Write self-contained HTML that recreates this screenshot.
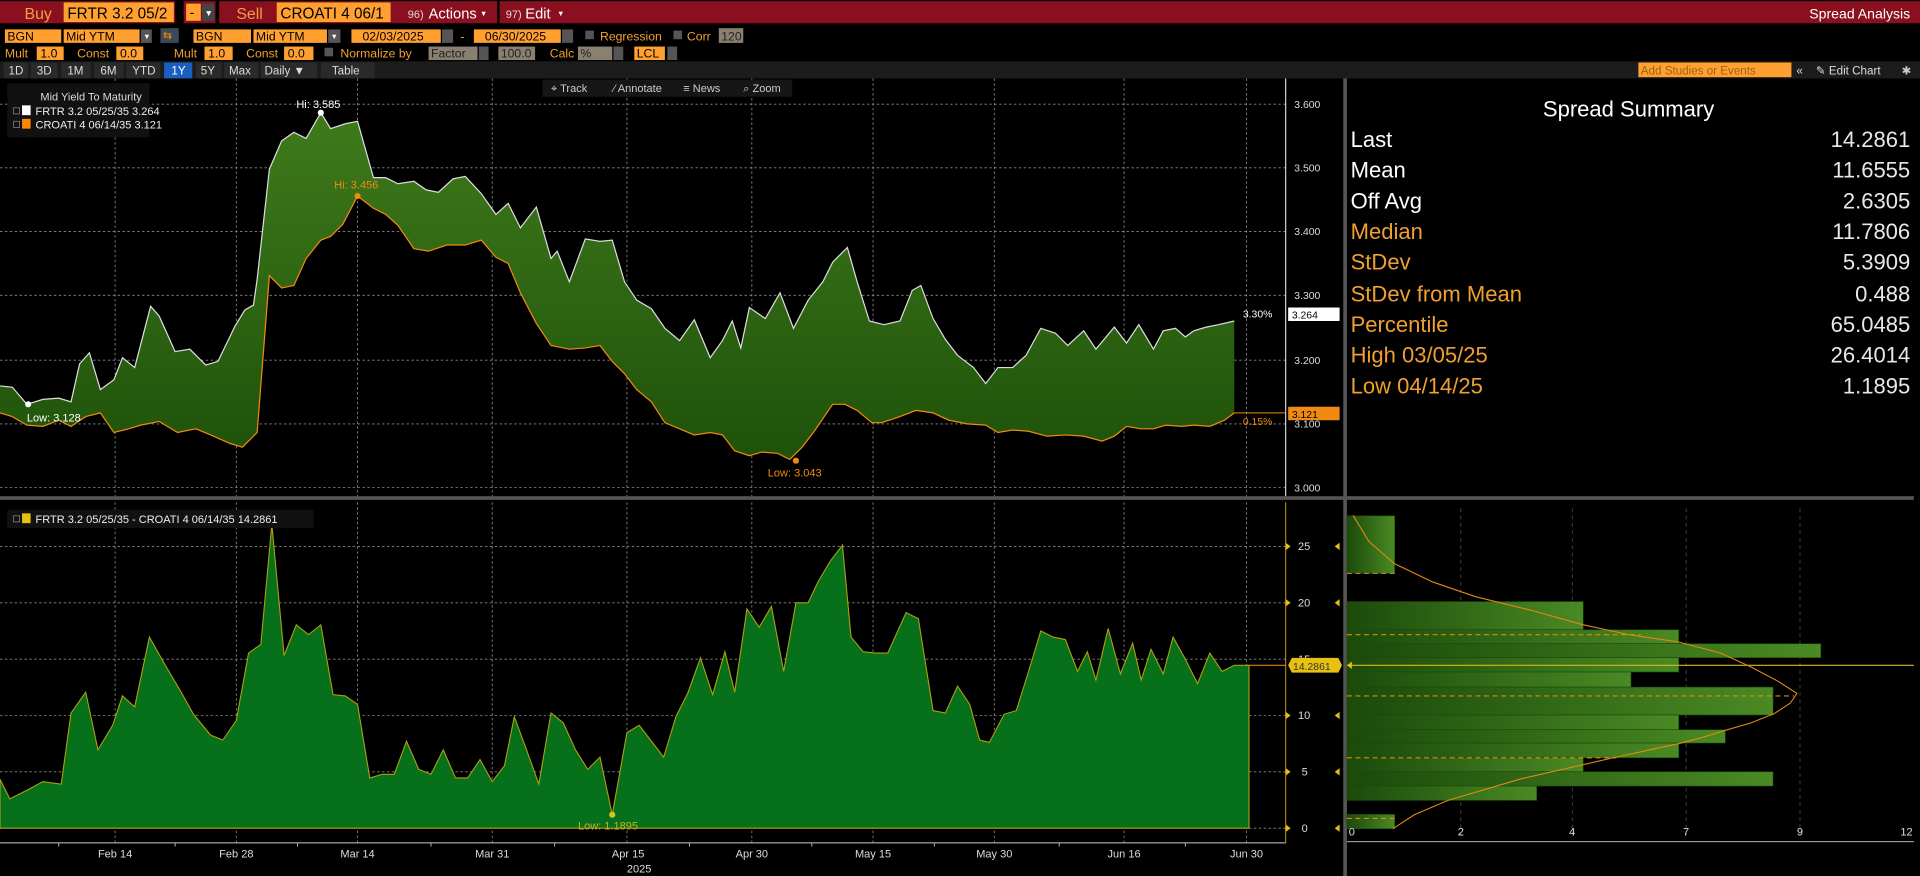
<!DOCTYPE html>
<html><head><meta charset="utf-8"><style>
html,body{margin:0;padding:0;background:#000;width:1920px;height:876px;overflow:hidden}
svg{display:block}
text{font-family:"Liberation Sans",sans-serif}
</style></head><body>
<svg width="1920" height="876" viewBox="0 0 1568 715" preserveAspectRatio="none" xmlns="http://www.w3.org/2000/svg">
<defs>
<linearGradient id="tg" x1="0" y1="0" x2="0" y2="1"><stop offset="0" stop-color="#3f7a1c"/><stop offset="1" stop-color="#1f520a"/></linearGradient>
<linearGradient id="hg" x1="0" y1="0" x2="1" y2="0"><stop offset="0" stop-color="#1b4a0b"/><stop offset="1" stop-color="#4a8a24"/></linearGradient>
</defs>
<rect width="1568" height="715" fill="#000"/>
<!-- top bar -->
<rect x="0" y="1" width="1568" height="18" fill="#8a1020"/>
<rect x="143" y="1" width="7" height="18" fill="#000"/>
<rect x="176" y="1" width="3" height="18" fill="#000"/>
<rect x="406" y="1" width="2" height="18" fill="#000"/>
<text x="20" y="15.5" font-size="13" fill="#f0a040">Buy</text>
<rect x="52" y="2" width="90" height="16" fill="#ffa030"/>
<text x="55" y="15" font-size="12.5" fill="#000">FRTR 3.2 05/2</text>
<rect x="152" y="3" width="12" height="14" fill="#ffa030"/><text x="155" y="14" font-size="11" fill="#000">-</text>
<rect x="165" y="3" width="10" height="14" fill="#444"/><text x="167" y="13" font-size="7" fill="#fff">▼</text>
<text x="193" y="15.5" font-size="13" fill="#f0a040">Sell</text>
<rect x="226" y="2" width="93" height="16" fill="#ffa030"/>
<text x="229" y="15" font-size="12.5" fill="#000">CROATI 4 06/1</text>
<text x="333" y="14.5" font-size="9" fill="#ddd">96)</text><text x="350" y="15" font-size="12" fill="#fff">Actions</text><text x="392" y="13" font-size="6" fill="#fff">▼</text>
<text x="413" y="14.5" font-size="9" fill="#ddd">97)</text><text x="429" y="15" font-size="12" fill="#fff">Edit</text><text x="455" y="13" font-size="6" fill="#fff">▼</text>
<text x="1560" y="15" font-size="11.5" fill="#fff" text-anchor="end">Spread Analysis</text>
<!-- row2 -->
<g font-size="10">
<rect x="4" y="24" width="46" height="11" fill="#ffa030"/><text x="6" y="33" fill="#000">BGN</text>
<rect x="52" y="24" width="62" height="11" fill="#ffa030"/><text x="54" y="33" fill="#000">Mid YTM</text>
<rect x="115" y="24" width="9" height="11" fill="#555"/><text x="117" y="32" font-size="6" fill="#fff">▼</text>
<rect x="131" y="23" width="15" height="12" fill="#3a4a5a"/><text x="133" y="32" font-size="9" fill="#f80">⇆</text>
<rect x="158" y="24" width="47" height="11" fill="#ffa030"/><text x="160" y="33" fill="#000">BGN</text>
<rect x="207" y="24" width="60" height="11" fill="#ffa030"/><text x="209" y="33" fill="#000">Mid YTM</text>
<rect x="268" y="24" width="10" height="11" fill="#555"/><text x="270" y="32" font-size="6" fill="#fff">▼</text>
<rect x="287" y="24" width="73" height="11" fill="#ffa030"/><text x="296" y="33" fill="#000">02/03/2025</text>
<rect x="361" y="24" width="9" height="11" fill="#555"/>
<text x="376" y="33" fill="#ffa030">-</text>
<rect x="387" y="24" width="71" height="11" fill="#ffa030"/><text x="396" y="33" fill="#000">06/30/2025</text>
<rect x="459" y="24" width="9" height="11" fill="#555"/>
<rect x="478" y="25" width="7" height="7" fill="#555"/><text x="490" y="33" fill="#f0a030">Regression</text>
<rect x="550" y="25" width="7" height="7" fill="#555"/><text x="561" y="33" fill="#f0a030">Corr</text>
<rect x="587" y="23" width="20" height="12" fill="#8a8070"/><text x="589" y="33" fill="#222">120</text>
<!-- row3 -->
<text x="4" y="47" fill="#f0a030">Mult</text><rect x="30" y="38" width="22" height="11" fill="#ffa030"/><text x="33" y="47" fill="#000">1.0</text>
<text x="63" y="47" fill="#f0a030">Const</text><rect x="95" y="38" width="22" height="11" fill="#ffa030"/><text x="98" y="47" fill="#000">0.0</text>
<text x="142" y="47" fill="#f0a030">Mult</text><rect x="167" y="38" width="23" height="11" fill="#ffa030"/><text x="170" y="47" fill="#000">1.0</text>
<text x="201" y="47" fill="#f0a030">Const</text><rect x="232" y="38" width="24" height="11" fill="#ffa030"/><text x="235" y="47" fill="#000">0.0</text>
<rect x="265" y="39" width="7" height="7" fill="#555"/><text x="278" y="47" fill="#f0a030">Normalize by</text>
<rect x="350" y="38" width="40" height="11" fill="#8a8070"/><text x="352" y="47" fill="#222">Factor</text>
<rect x="391" y="38" width="8" height="11" fill="#555"/>
<rect x="407" y="38" width="30" height="11" fill="#8a8070"/><text x="409" y="47" fill="#222">100.0</text>
<text x="449" y="47" fill="#f0a030">Calc</text>
<rect x="472" y="38" width="28" height="11" fill="#8a8070"/><text x="474" y="47" fill="#222">%</text>
<rect x="501" y="38" width="8" height="11" fill="#555"/>
<rect x="518" y="38" width="25" height="11" fill="#ffa030"/><text x="520" y="47" fill="#000">LCL</text>
<rect x="545" y="38" width="8" height="11" fill="#555"/>
</g>
<!-- row4 -->
<rect x="0" y="50" width="1568" height="14" fill="#1c1c1c"/>
<g font-size="9.5" fill="#ddd">
<rect x="3" y="51" width="20" height="13" fill="#2a2a2a"/><text x="7" y="61">1D</text>
<rect x="25" y="51" width="22" height="13" fill="#2a2a2a"/><text x="30" y="61">3D</text>
<rect x="50" y="51" width="24" height="13" fill="#2a2a2a"/><text x="55" y="61">1M</text>
<rect x="77" y="51" width="24" height="13" fill="#2a2a2a"/><text x="82" y="61">6M</text>
<rect x="103" y="51" width="28" height="13" fill="#2a2a2a"/><text x="108" y="61">YTD</text>
<rect x="134" y="51" width="23" height="13" fill="#1a5fc0"/><text x="140" y="61" fill="#fff">1Y</text>
<rect x="160" y="51" width="21" height="13" fill="#2a2a2a"/><text x="164" y="61">5Y</text>
<rect x="183" y="51" width="28" height="13" fill="#2a2a2a"/><text x="187" y="61">Max</text>
<rect x="213" y="51" width="46" height="13" fill="#2a2a2a"/><text x="216" y="61">Daily ▼</text>
<rect x="262" y="51" width="44" height="13" fill="#2a2a2a"/><text x="271" y="61">Table</text>
<rect x="1338" y="51" width="125" height="12" fill="#ffa030"/><text x="1340" y="61" fill="#a06010">Add Studies or Events</text>
<text x="1467" y="61" fill="#ddd">«</text>
<text x="1483" y="61" fill="#ddd">✎ Edit Chart</text>
<text x="1553" y="61" fill="#ccc">✱</text>
</g>
<!-- top chart grid -->
<g stroke="#888" stroke-width="0.7" stroke-dasharray="2,2">
<path d="M0 85H1050M0 137H1050M0 189H1050M0 241H1050M0 294H1050M0 346H1050M0 398H1050"/>
<path d="M94 64V405M193 64V405M292 64V405M402 64V405M512 64V405M614 64V405M713 64V405M812 64V405M918 64V405M1018 64V405"/>
<path d="M0 446H1050M0 492H1050M0 538H1050M0 584H1050M0 630H1050M0 676H1050"/>
<path d="M94 410V688M193 410V688M292 410V688M402 410V688M512 410V688M614 410V688M713 410V688M812 410V688M918 410V688M1018 410V688"/>
</g>
<!-- top fill -->
<polygon fill="url(#tg)" points="0,315 10,316 22,330 35,326 48,325 58,328 65,297 73,288 82,318 93,310 100,292 110,300 123,250 130,258 143,287 155,285 168,298 178,295 192,266 200,253 207,249 210,228 220,138 230,115 240,108 250,113 262,92 270,105 282,101 292,99 305,145 315,145 325,150 338,148 348,155 358,157 370,146 380,144 393,158 405,175 415,166 425,186 438,169 450,211 455,205 465,230 478,195 490,197 500,196 510,230 520,245 532,252 543,268 555,278 567,261 580,292 590,278 598,262 605,284 612,251 625,260 637,239 648,268 660,245 672,230 680,214 692,202 700,230 710,262 722,265 735,262 745,237 752,233 762,260 772,277 782,290 795,300 805,313 815,300 827,300 838,290 850,268 862,272 872,282 885,270 895,285 910,267 920,280 930,265 942,285 950,270 960,268 968,275 975,270 985,267 995,265 1008,262 1008,337 1000,343 988,348 975,347 965,348 952,347 942,350 932,350 920,348 910,356 900,360 885,356 870,355 855,356 840,352 827,351 815,353 805,347 790,346 775,343 762,337 748,335 735,340 720,345 712,345 700,335 690,330 680,330 665,352 655,365 645,375 635,370 622,369 612,372 600,368 590,355 580,353 567,355 555,350 543,345 532,328 520,318 510,305 500,295 490,282 478,284 465,285 450,282 438,264 425,239 415,215 405,210 393,196 380,200 365,200 350,205 338,203 325,184 315,175 305,170 292,160 280,183 270,193 262,196 250,211 240,233 230,235 220,225 210,353 198,365 188,362 172,355 160,350 145,353 130,344 115,347 105,350 93,353 82,337 70,340 58,348 48,343 35,348 22,347 10,340 0,337"/>
<polyline fill="none" stroke="#ddd" stroke-width="1" points="0,315 10,316 22,330 35,326 48,325 58,328 65,297 73,288 82,318 93,310 100,292 110,300 123,250 130,258 143,287 155,285 168,298 178,295 192,266 200,253 207,249 210,228 220,138 230,115 240,108 250,113 262,92 270,105 282,101 292,99 305,145 315,145 325,150 338,148 348,155 358,157 370,146 380,144 393,158 405,175 415,166 425,186 438,169 450,211 455,205 465,230 478,195 490,197 500,196 510,230 520,245 532,252 543,268 555,278 567,261 580,292 590,278 598,262 605,284 612,251 625,260 637,239 648,268 660,245 672,230 680,214 692,202 700,230 710,262 722,265 735,262 745,237 752,233 762,260 772,277 782,290 795,300 805,313 815,300 827,300 838,290 850,268 862,272 872,282 885,270 895,285 910,267 920,280 930,265 942,285 950,270 960,268 968,275 975,270 985,267 995,265 1008,262"/>
<polyline fill="none" stroke="#f08a10" stroke-width="1" points="1008,337 1000,343 988,348 975,347 965,348 952,347 942,350 932,350 920,348 910,356 900,360 885,356 870,355 855,356 840,352 827,351 815,353 805,347 790,346 775,343 762,337 748,335 735,340 720,345 712,345 700,335 690,330 680,330 665,352 655,365 645,375 635,370 622,369 612,372 600,368 590,355 580,353 567,355 555,350 543,345 532,328 520,318 510,305 500,295 490,282 478,284 465,285 450,282 438,264 425,239 415,215 405,210 393,196 380,200 365,200 350,205 338,203 325,184 315,175 305,170 292,160 280,183 270,193 262,196 250,211 240,233 230,235 220,225 210,353 198,365 188,362 172,355 160,350 145,353 130,344 115,347 105,350 93,353 82,337 70,340 58,348 48,343 35,348 22,347 10,340 0,337"/>
<circle cx="262" cy="92" r="2.5" fill="#fff"/><text x="242" y="88" font-size="9" fill="#fff">Hi: 3.585</text>
<circle cx="292" cy="160" r="2.5" fill="#f08a10"/><text x="273" y="154" font-size="9" fill="#f08a10">Hi: 3.456</text>
<circle cx="23" cy="330" r="2.5" fill="#fff"/><text x="22" y="344" font-size="9" fill="#fff">Low: 3.128</text>
<circle cx="650" cy="376" r="2.5" fill="#f08a10"/><text x="627" y="389" font-size="9" fill="#f08a10">Low: 3.043</text>
<!-- legend top -->
<rect x="6" y="68" width="116" height="44" fill="#111"/>
<text x="33" y="82" font-size="9" fill="#ddd">Mid Yield To Maturity</text>
<rect x="11" y="88" width="5" height="5" fill="none" stroke="#888" stroke-width="0.6"/><rect x="18" y="86" width="7" height="8" fill="#fff"/>
<text x="29" y="94" font-size="9" fill="#eee">FRTR 3.2 05/25/35  3.264</text>
<rect x="11" y="99" width="5" height="5" fill="none" stroke="#888" stroke-width="0.6"/><rect x="18" y="97" width="7" height="8" fill="#f80"/>
<text x="29" y="105" font-size="9" fill="#eee">CROATI 4 06/14/35 3.121</text>
<!-- toolbar -->
<rect x="443" y="65" width="204" height="14" fill="#161616"/>
<g font-size="9" fill="#ccc"><text x="450" y="75">⌖ Track</text><text x="501" y="75">⁄ Annotate</text><text x="558" y="75">≡ News</text><text x="607" y="75">⌕ Zoom</text></g>
<!-- top axis -->
<line x1="1050" y1="64" x2="1050" y2="405" stroke="#fff" stroke-width="0.8"/>
<g font-size="8.5" fill="#ddd">
<text x="1057" y="88">3.600</text><text x="1057" y="140">3.500</text><text x="1057" y="192">3.400</text><text x="1057" y="244">3.300</text><text x="1057" y="297">3.200</text><text x="1057" y="349">3.100</text><text x="1057" y="401">3.000</text>
</g>
<text x="1015" y="259" font-size="8.5" fill="#fff">3.30%</text>
<rect x="1052" y="251" width="42" height="11" fill="#fff"/><text x="1055" y="260" font-size="8.5" fill="#000">3.264</text>
<line x1="1008" y1="337" x2="1050" y2="337" stroke="#f08a10" stroke-width="0.8"/>
<text x="1015" y="347" font-size="8.5" fill="#f08a10">0.15%</text>
<rect x="1052" y="332" width="42" height="11" fill="#f08a10"/><text x="1055" y="341" font-size="8.5" fill="#000">3.121</text>
<!-- separators -->
<rect x="0" y="405" width="1563" height="3" fill="#555"/>
<rect x="1097" y="64" width="3" height="651" fill="#555"/>
<!-- lower chart -->
<polygon fill="#06701a" stroke="#b0a010" stroke-width="0.9" points="0,636 8,652 22,645 35,638 50,640 58,582 70,565 80,612 92,592 100,568 110,577 122,520 135,543 148,565 158,583 172,600 182,604 193,588 203,533 213,526 222,428 232,535 242,510 252,518 262,510 272,567 282,568 292,575 302,635 312,632 322,632 332,605 342,628 352,632 362,612 372,635 382,635 392,620 402,638 412,625 420,585 430,612 440,640 450,582 460,590 470,612 480,628 490,618 500,665 512,598 522,592 532,605 542,618 552,585 562,565 572,537 582,567 592,532 600,565 610,497 620,512 630,495 640,548 650,492 660,492 668,475 678,458 688,445 695,520 705,532 715,533 725,533 740,500 750,505 762,580 772,582 782,560 792,575 800,604 808,606 820,583 830,580 840,548 850,515 860,520 870,522 880,548 888,532 895,555 905,513 915,550 925,525 932,555 940,530 950,550 958,520 968,538 978,558 988,533 998,548 1008,543 1020,543 1020,676 0,676"/>
<circle cx="222" cy="428" r="2" fill="#9a8a20"/>
<circle cx="500" cy="665" r="2.5" fill="#e0c020"/><text x="472" y="677" font-size="9" fill="#c8b020">Low: 1.1895</text>
<rect x="6" y="416" width="250" height="15" fill="#111"/>
<rect x="11" y="421" width="5" height="5" fill="none" stroke="#888" stroke-width="0.6"/><rect x="18" y="419" width="7" height="8" fill="#e8c010"/>
<text x="29" y="427" font-size="9" fill="#eee">FRTR 3.2 05/25/35 - CROATI 4 06/14/35 14.2861</text>
<line x1="0" y1="688" x2="1050" y2="688" stroke="#ccc" stroke-width="0.8"/>
<g stroke="#ccc" stroke-width="0.7"><path d="M48 688v3M143 688v3M243 688v3M352 688v3M453 688v3M563 688v3M663 688v3M763 688v3M865 688v3M968 688v3"/></g>
<g font-size="9" fill="#ddd" text-anchor="middle">
<text x="94" y="700">Feb 14</text><text x="193" y="700">Feb 28</text><text x="292" y="700">Mar 14</text><text x="402" y="700">Mar 31</text><text x="513" y="700">Apr 15</text><text x="614" y="700">Apr 30</text><text x="713" y="700">May 15</text><text x="812" y="700">May 30</text><text x="918" y="700">Jun 16</text><text x="1018" y="700">Jun 30</text><text x="522" y="712">2025</text>
</g>
<line x1="1050" y1="410" x2="1050" y2="688" stroke="#c8a010" stroke-width="0.8"/>
<g font-size="9" fill="#ddd">
<text x="1060" y="449">25</text><text x="1060" y="495">20</text><text x="1060" y="541">15</text><text x="1060" y="587">10</text><text x="1063" y="633">5</text><text x="1063" y="679">0</text>
</g>
<g fill="#e8c010"><path d="M1050 443l4 3-4 3zM1050 489l4 3-4 3zM1050 581l4 3-4 3zM1050 627l4 3-4 3zM1050 673l4 3-4 3zM1094 443l-4 3 4 3zM1094 489l-4 3 4 3zM1094 581l-4 3 4 3zM1094 627l-4 3 4 3zM1094 673l-4 3 4 3z"/></g>
<line x1="1020" y1="543" x2="1050" y2="543" stroke="#e08010" stroke-width="0.9"/>
<path d="M1052 543l3-6h38l3 6-3 6h-38z" fill="#e8c010"/><text x="1056" y="547" font-size="8.5" fill="#333">14.2861</text>
<!-- histogram -->
<g stroke="#555" stroke-width="0.6" stroke-dasharray="3,3"><path d="M1193 415V683M1284 415V683M1377 415V683M1470 415V683"/></g>
<g fill="url(#hg)" stroke="#1a4a0a" stroke-width="0.5">
<rect x="1100" y="421" width="39" height="47"/>
<rect x="1100" y="491" width="193" height="23"/>
<rect x="1100" y="514" width="271" height="11.4"/>
<rect x="1100" y="525.4" width="387" height="11.4"/>
<rect x="1100" y="536.8" width="271" height="11.7"/>
<rect x="1100" y="548.5" width="232" height="12.3"/>
<rect x="1100" y="560.8" width="348" height="22.8"/>
<rect x="1100" y="583.6" width="271" height="12"/>
<rect x="1100" y="595.6" width="309" height="10.9"/>
<rect x="1100" y="606.5" width="271" height="12"/>
<rect x="1100" y="618.5" width="193" height="11.4"/>
<rect x="1100" y="629.9" width="348" height="11.7"/>
<rect x="1100" y="641.6" width="155" height="11.7"/>
<rect x="1100" y="664.7" width="39" height="11.7"/>
</g>
<g stroke="#e08a10" stroke-width="0.9" stroke-dasharray="4,3"><path d="M1100 468H1141M1100 518H1340M1100 568H1465M1100 618.5H1320M1100 668H1140"/></g>
<line x1="1100" y1="543" x2="1563" y2="543" stroke="#d8b810" stroke-width="0.9"/>
<path d="M1100 543l4-3v6z" fill="#e8c010"/>
<polyline fill="none" stroke="#e08a10" stroke-width="0.9" points="1105,420.6 1118,442 1138.6,460 1170,475 1205,487 1250,498 1293,510 1330,518 1370.8,524 1405,533 1430,544.4 1452,556 1467.5,566 1462,574 1448.8,582.5 1430,590 1409.4,596 1390,602 1370.8,607 1317.5,618.5 1242.5,635.6 1182.5,653.3 1155,665 1137.5,676.4"/>
<line x1="1100" y1="687" x2="1563" y2="687" stroke="#ccc" stroke-width="0.8"/>
<g font-size="9" fill="#ddd" text-anchor="middle"><text x="1104" y="682">0</text><text x="1193" y="682">2</text><text x="1284" y="682">4</text><text x="1377" y="682">7</text><text x="1470" y="682">9</text><text x="1557" y="682">12</text></g>
<!-- summary -->
<text x="1330" y="95" font-size="18" fill="#fff" text-anchor="middle">Spread Summary</text>
<g font-size="18">
<text x="1103" y="120" fill="#fff">Last</text><text x="1560" y="120" fill="#e8e8e8" text-anchor="end">14.2861</text>
<text x="1103" y="145" fill="#fff">Mean</text><text x="1560" y="145" fill="#e8e8e8" text-anchor="end">11.6555</text>
<text x="1103" y="170" fill="#fff">Off Avg</text><text x="1560" y="170" fill="#e8e8e8" text-anchor="end">2.6305</text>
<text x="1103" y="195" fill="#f0a030">Median</text><text x="1560" y="195" fill="#e8e8e8" text-anchor="end">11.7806</text>
<text x="1103" y="220" fill="#f0a030">StDev</text><text x="1560" y="220" fill="#e8e8e8" text-anchor="end">5.3909</text>
<text x="1103" y="246" fill="#f0a030">StDev from Mean</text><text x="1560" y="246" fill="#e8e8e8" text-anchor="end">0.488</text>
<text x="1103" y="271" fill="#f0a030">Percentile</text><text x="1560" y="271" fill="#e8e8e8" text-anchor="end">65.0485</text>
<text x="1103" y="296" fill="#f0a030">High 03/05/25</text><text x="1560" y="296" fill="#e8e8e8" text-anchor="end">26.4014</text>
<text x="1103" y="321" fill="#f0a030">Low 04/14/25</text><text x="1560" y="321" fill="#e8e8e8" text-anchor="end">1.1895</text>
</g>
</svg>
</body></html>
